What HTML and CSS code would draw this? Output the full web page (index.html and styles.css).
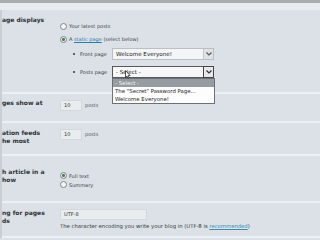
FILE: index.html
```html
<!DOCTYPE html>
<html>
<head>
<meta charset="utf-8">
<link rel="stylesheet" href="styles.css">
</head>
<body>
<div class="topbar"></div>
<div class="strip"></div>
<div class="page">
  <div class="row r1">
    <div class="label">age displays</div>
    <div class="field">
      <div class="radio-line"><span class="radio"></span><span>Your latest posts</span></div>
      <div class="radio-line gap"><span class="radio on"></span><span>A <a class="link">static page</a> (select below)</span></div>
      <ul class="pages">
        <li class="page-item"><span class="bullet"></span><span class="plabel">Front page</span>
          <span class="select"><span>Welcome Everyone!</span><span class="arrow"><svg width="6" height="4" viewBox="0 0 6 4"><path d="M0.5 0.5 L3 3 L5.5 0.5" fill="none" stroke="#555" stroke-width="1.1"/></svg></span></span>
        </li>
        <li class="page-item second"><span class="bullet"></span><span class="plabel">Posts page</span>
          <span class="select focus"><span>- Select -</span><span class="arrow"><svg width="6" height="4" viewBox="0 0 6 4"><path d="M0.5 0.5 L3 3 L5.5 0.5" fill="none" stroke="#333" stroke-width="1.2"/></svg></span>
            <span class="dropdown">
              <span class="opt hl">- Select -</span>
              <span class="opt">The "Secret" Password Page...</span>
              <span class="opt">Welcome Everyone!</span>
            </span>
            <svg class="cursor" width="6" height="9" viewBox="0 0 6 9"><path d="M0.5 0.5 L0.5 7.5 L2 6 L3.2 8.5 L4.2 8 L3.1 5.6 L5.2 5.6 Z" fill="#fff" stroke="#111" stroke-width="0.7"/></svg>
          </span>
        </li>
      </ul>
    </div>
  </div>
  <div class="row r2">
    <div class="label">ges show at</div>
    <div class="field inline"><span class="input small">10</span><span class="unit">posts</span></div>
  </div>
  <div class="row r3">
    <div class="label">ation feeds<br>he most</div>
    <div class="field inline"><span class="input small">10</span><span class="unit">posts</span></div>
  </div>
  <div class="row r4">
    <div class="label">h article in a<br>how</div>
    <div class="field">
      <div class="radio-line tight"><span class="radio on"></span><span>Full text</span></div>
      <div class="radio-line tight"><span class="radio"></span><span>Summary</span></div>
    </div>
  </div>
  <div class="row r5">
    <div class="label">ng for pages<br>ds</div>
    <div class="field">
      <span class="input wide">UTF-8</span>
      <div class="desc">The character encoding you write your blog in (UTF-8 is <a class="link rec">recommended</a>)</div>
    </div>
  </div>
</div>
</body>
</html>
```
FILE: styles.css
```css
html, body {
  margin: 0;
  padding: 0;
  width: 320px;
  height: 240px;
  overflow: hidden;
  background: #dbe1e7;
  font-family: "DejaVu Sans", Verdana, sans-serif;
  color: #3a3d40;
}
.topbar { height: 3px; background: #a9aeb3; }
.strip { height: 7px; background: #e8ecef; }
.page {
  border-left: 2px solid #c9cfd5;
}
.row {
  display: grid;
  grid-template-columns: 58px 1fr;
  border-bottom: 2px solid #edf0f3;
  box-sizing: border-box;
}
.r1 { height: 84px; }
.r2 { height: 29px; }
.r3 { height: 33px; }
.r4 { height: 47px; }
.r5 { height: 35px; }
.label {
  font-weight: bold;
  font-size: 6px;
  line-height: 8px;
  color: #2f3236;
  white-space: nowrap;
}
.r1 .label { padding-top: 6px; }
.r2 .label { padding-top: 5px; }
.r3 .label { padding-top: 6px; }
.r4 .label { padding-top: 12px; }
.r5 .label { padding-top: 6px; }
.field { font-size: 5px; line-height: 8px; }
.r1 .field { padding-top: 12px; }
.r2 .field { padding-top: 6px; }
.r3 .field { padding-top: 6px; }
.r4 .field { padding-top: 15px; }
.r5 .field { padding-top: 6px; }
.radio-line {
  display: flex;
  align-items: center;
  height: 8px;
  white-space: nowrap;
  color: #3e4246;
}
.radio-line.gap { margin-top: 5px; }
.radio-line.tight { height: 9px; }
.radio {
  width: 5px;
  height: 5px;
  border: 1px solid #80878d;
  border-radius: 50%;
  background: #f3f5f6;
  margin-right: 2px;
  flex: none;
}
.radio.on {
  background: radial-gradient(circle, #4d7a55 0 1.3px, #e9efe9 1.6px);
}
.link {
  color: #2a7db0;
  text-decoration: underline;
}
.rec { color: #3b8fb3; }
.pages {
  list-style: none;
  margin: 5px 0 0 0;
  padding: 0;
}
.page-item {
  display: flex;
  align-items: center;
  height: 12px;
  white-space: nowrap;
}
.page-item.second { margin-top: 6px; }
.bullet {
  width: 2px;
  height: 2px;
  border-radius: 50%;
  background: #333;
  margin-left: 13px;
  margin-right: 5px;
  flex: none;
}
.plabel { width: 32px; flex: none; }
.select {
  position: relative;
  display: flex;
  align-items: center;
  box-sizing: border-box;
  width: 102px;
  height: 12px;
  padding-left: 3px;
  background: #f4f5f6;
  border: 1px solid #b9bfc4;
  font-size: 5.6px;
  color: #222;
}
.select.focus { border-color: #55595d; background: #f7f7f8; }
.arrow {
  position: absolute;
  right: 0;
  top: 0;
  bottom: 0;
  width: 9px;
  display: flex;
  align-items: center;
  justify-content: center;
  background: #dfe2e5;
  border-left: 1px solid #c3c8cc;
}
.select.focus .arrow { background: #e6e8ea; border: 1px solid #444; top: -1px; bottom: -1px; right: -1px; }
.dropdown {
  position: absolute;
  left: -1px;
  top: 11px;
  width: 103px;
  box-sizing: border-box;
  border: 1px solid #6c7176;
  background: #fdfdfd;
  display: flex;
  flex-direction: column;
  z-index: 2;
}
.opt {
  height: 8px;
  line-height: 8px;
  padding-left: 2px;
  font-size: 5.4px;
  color: #1e1e1e;
}
.opt.hl { background: #969ca2; color: #f4f4f4; }
.cursor {
  position: absolute;
  left: 12px;
  top: 3px;
  z-index: 3;
}
.inline {
  display: flex;
  align-items: flex-start;
}
.input {
  display: block;
  box-sizing: border-box;
  height: 11px;
  line-height: 9px;
  padding-left: 3px;
  background: #e9ecef;
  border: 1px solid #d3d8dc;
  font-size: 5px;
  color: #333;
}
.input.small { width: 22px; }
.input.wide { width: 87px; }
.unit { margin-left: 3px; line-height: 11px; color: #555; }
.desc { margin-top: 2px; white-space: nowrap; color: #3a3d40; font-size: 5.3px; }
```
